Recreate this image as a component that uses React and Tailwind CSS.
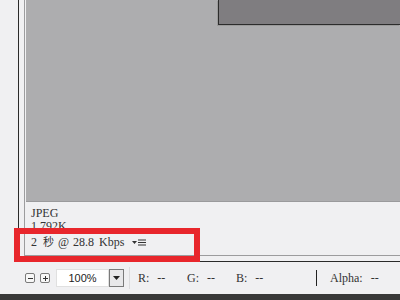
import React from 'react';

const serif = { fontFamily: '"Liberation Serif", "Noto Sans CJK SC", serif' };

function SmallBtn({ sign }) {
  return (
    <div className="w-[10px] h-[10px] border border-[#7a7a7a] rounded-[2px] bg-[#f7f7f7] flex items-center justify-center">
      {sign === '-' ? (
        <div className="w-[5px] h-[1px] bg-[#333]" />
      ) : (
        <div className="relative w-[5px] h-[5px]">
          <div className="absolute left-0 top-[2px] w-[5px] h-[1px] bg-[#333]" />
          <div className="absolute left-[2px] top-0 w-[1px] h-[5px] bg-[#333]" />
        </div>
      )}
    </div>
  );
}

function Readout({ label, w }) {
  return (
    <div className={`flex text-[12px] text-[#333] ${w}`} style={serif}>
      <span>{label}:</span>
      <span className="ml-[8px]">--</span>
    </div>
  );
}

export default function App() {
  return (
    <div className="relative w-[400px] h-[300px] overflow-hidden bg-[#f0f0f2] flex flex-col">
      {/* main area */}
      <div className="flex h-[262px]">
        <div className="w-[18px] bg-[#f0f0f2]" />
        <div className="flex-1 flex flex-col border-l border-[#2a2a2a] border-b border-b-[#2a2a2a] pl-[5px] bg-[#f0f0f2]">
          <div className="flex-1 flex flex-col border-l border-[#9c9c9e] border-b border-b-[#9c9c9e] pl-[1px] mb-[5px]">
            <div className="h-[202px] bg-[#adadaf] border-b border-[#9a9a9c] relative">
              <div className="absolute right-0 top-0 w-[182px] h-[25px] bg-[#7f7d80] border-l border-b border-[#2c2c2c] shadow-[-1px_1px_0_#9a9a9a]" />
            </div>
            <div className="flex-1 pl-[5px] pt-[5px] text-[12px] leading-[13px] text-[#333]" style={serif}>
              <div>JPEG</div>
              <div>1.792K</div>
              <div className="mt-[3px] flex items-center">
                <span>2</span>
                <span className="ml-[6px] text-[11px]">秒</span>
                <span className="ml-[4px]">@</span>
                <span className="ml-[4px]">28.8</span>
                <span className="ml-[5px]">Kbps</span>
                <span className="ml-[8px] flex items-center gap-[1px]">
                  <svg width="5" height="4" viewBox="0 0 5 4"><path d="M0 0H5L2.5 3Z" fill="#333" /></svg>
                  <svg width="8" height="7" viewBox="0 0 8 7"><path d="M0 1H8M0 3.5H8M0 6H8" stroke="#333" strokeWidth="1" /></svg>
                </span>
              </div>
            </div>
          </div>
        </div>
      </div>

      {/* status bar */}
      <div className="h-[32px] flex items-center pl-[25px] bg-[#f0f0f2]">
        <SmallBtn sign="-" />
        <div className="ml-[5px]"><SmallBtn sign="+" /></div>
        <div className="ml-[6px] flex h-[18px] items-stretch">
          <div className="w-[53px] bg-white border border-[#e0e0e0] flex items-center justify-center text-[11px] text-[#222]" style={{ fontFamily: '"Liberation Sans", sans-serif' }}>100%</div>
          <div className="w-[15px] border border-[#7a7a7a] bg-[#e8e8ea] flex items-center justify-center">
            <svg width="7" height="4" viewBox="0 0 7 4"><path d="M0 0H7L3.5 4Z" fill="#222" /></svg>
          </div>
        </div>
        <div className="ml-[5px] w-[1px] h-[22px] bg-[#dcdcde]" />
        <div className="ml-[8px] flex items-center">
          <Readout label="R" w="w-[49px]" />
          <Readout label="G" w="w-[49px]" />
          <Readout label="B" w="w-[80px]" />
        </div>
        <div className="w-[1px] h-[16px] bg-[#222]" />
        <div className="ml-[13px]"><Readout label="Alpha" w="w-[60px]" /></div>
      </div>

      <div className="flex-1 bg-[#383838]" />

      {/* red annotation box */}
      <div className="absolute left-[14px] top-[228px] w-[186px] h-[34px] border-[6px] border-[#e8262c]" />
    </div>
  );
}
